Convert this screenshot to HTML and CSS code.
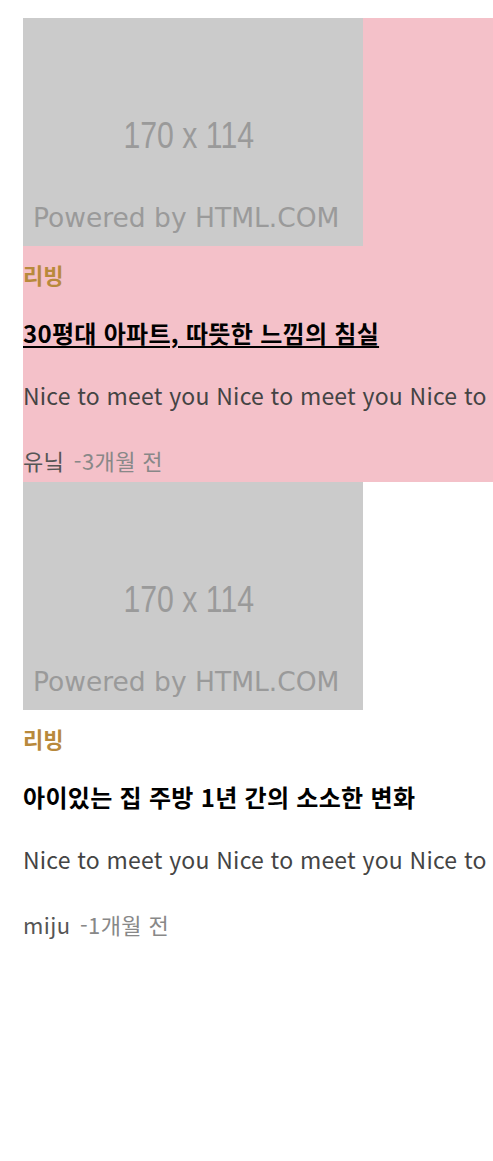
FILE: index.html
```html
<!DOCTYPE html>
<html lang="ko">

<head>
    <meta charset="UTF-8" />
    <meta name="viewport" content="width=device-width, initial-scale=1.0" />
    <title>매거진</title>
    <link rel="stylesheet" href="styles.css">
</head>

<body>
    <ul class="list">
        <li class="card active">
            <div class="thumb">
                <span class="size">170 x 114</span>
                <span class="powered">Powered by HTML.COM</span>
            </div>
            <p class="cate">리빙</p>
            <h3 class="title"><a href="#">30평대 아파트, 따뜻한 느낌의 침실</a></h3>
            <p class="desc">Nice to meet you Nice to meet you Nice to</p>
            <p class="meta">유닠 <span class="time">-3개월 전</span></p>
        </li>
        <li class="card">
            <div class="thumb">
                <span class="size">170 x 114</span>
                <span class="powered">Powered by HTML.COM</span>
            </div>
            <p class="cate">리빙</p>
            <h3 class="title"><a href="#">아이있는 집 주방 1년 간의 소소한 변화</a></h3>
            <p class="desc">Nice to meet you Nice to meet you Nice to</p>
            <p class="meta">miju <span class="time">-1개월 전</span></p>
        </li>
    </ul>
</body>

</html>
```
FILE: styles.css
```css
* {
    box-sizing: border-box;
}

body {
    margin: 0;
    font-family: "Noto Sans CJK KR", "Noto Sans", sans-serif;
    background: #fff;
    overflow: hidden;
}

.list {
    list-style: none;
    margin: 0;
    padding: 18px 0 0 23px;
}

.card {
    width: 470px;
    padding-bottom: 6px;
}

.card.active {
    background-color: #f4c1c9;
}

/* placeholder image 170x114 @2x */
.thumb {
    width: 340px;
    height: 228px;
    background: #cbcbcb;
    color: #9a9a9a;
    display: flex;
    flex-direction: column;
    align-items: center;
}

.thumb .size {
    font-family: "Liberation Sans", sans-serif;
    font-size: 36px;
    line-height: 40px;
    margin-top: 98px;
    margin-right: 8px;
    transform: scaleX(0.84);
}

.thumb .powered {
    align-self: flex-start;
    font-family: "DejaVu Sans", sans-serif;
    font-size: 26.5px;
    line-height: 32px;
    margin-top: 46px;
    margin-left: 10px;
}

.cate {
    margin: 14px 0 0;
    font-size: 22px;
    line-height: 28px;
    font-weight: bold;
    color: #b8893b;
}

.title {
    margin: 28px 0 0;
    font-size: 24px;
    line-height: 34px;
    letter-spacing: 0.3px;
}

.title a {
    color: #000;
    text-decoration: none;
}

.active .title a {
    text-decoration: underline;
    text-underline-offset: 3px;
}

.desc {
    margin: 28px 0 0;
    font-size: 23px;
    line-height: 34px;
    letter-spacing: 0.2px;
    color: #444;
    white-space: nowrap;
}

.meta {
    margin: 32px 0 0;
    font-size: 22px;
    line-height: 32px;
    letter-spacing: 0.4px;
    color: #555;
}

.meta .time {
    color: #888;
    margin-left: 3px;
}
```
